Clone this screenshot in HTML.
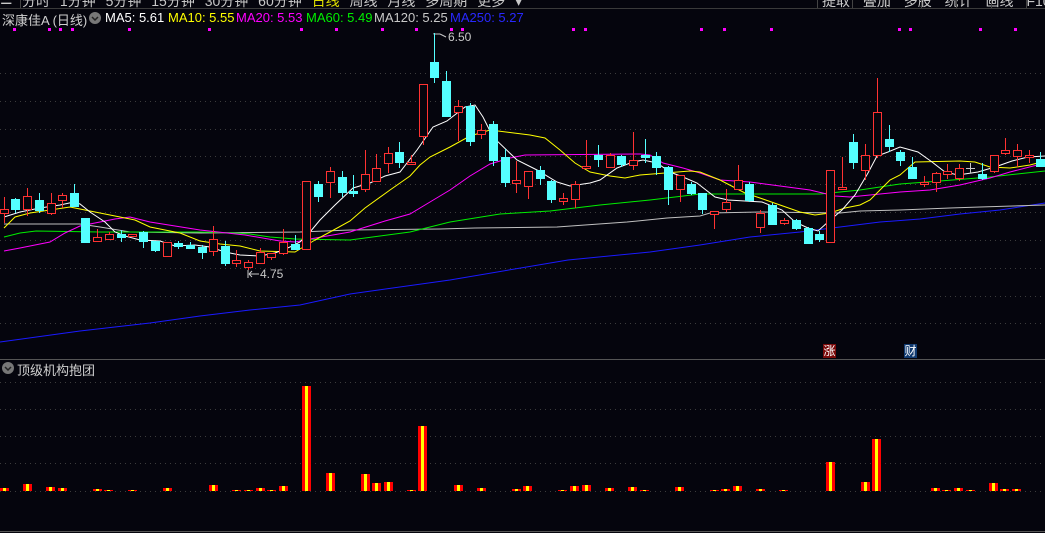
<!DOCTYPE html>
<html><head><meta charset="utf-8"><style>
html,body{margin:0;padding:0;background:#05050d;width:1045px;height:533px;overflow:hidden;font-family:"Liberation Sans","Noto Sans CJK SC",sans-serif}
.t{position:absolute;white-space:nowrap}
</style></head><body>
<div style="position:absolute;left:0;top:0;width:1045px;height:8px;overflow:hidden;border-bottom:1px solid #3a3a3a">
<div class="t" style="left:22px;top:-9px;font-size:14px;color:#c8c8c8;word-spacing:6px">分时 1分钟 5分钟 15分钟 30分钟 60分钟 <span style="color:#e0e000">日线</span> 周线 月线 多周期 更多 ▾</div>
<div class="t" style="left:0;top:-9px;font-size:14px;color:#c8c8c8">☰</div>
<div class="t" style="left:822px;top:-9px;font-size:14px;color:#c8c8c8;word-spacing:9px">提取 叠加 多股 统计 画线 F10 标</div>
</div>
<div class="t" style="left:2px;top:10px;font-size:13px;color:#d0d0d0">深康佳A (日线)</div>
<svg width="14" height="14" style="position:absolute;left:88px;top:11px"><circle cx="7" cy="7" r="6" fill="#777"/><polyline points="4,6 7,9 10,6" fill="none" stroke="#222" stroke-width="1.5"/></svg>
<div class="t" style="left:105px;top:10px;font-size:13px;color:#fff">MA5: 5.61</div>
<div class="t" style="left:168px;top:10px;font-size:13px;color:#ffff00">MA10: 5.55</div>
<div class="t" style="left:236px;top:10px;font-size:13px;color:#ff00ff">MA20: 5.53</div>
<div class="t" style="left:306px;top:10px;font-size:13px;color:#00ee00">MA60: 5.49</div>
<div class="t" style="left:374px;top:10px;font-size:13px;color:#c8c8c8">MA120: 5.25</div>
<div class="t" style="left:450px;top:10px;font-size:13px;color:#2828ff">MA250: 5.27</div>
<div class="t" style="left:17px;top:360px;font-size:13px;color:#d0d0d0">顶级机构抱团</div>
<svg width="14" height="14" style="position:absolute;left:1px;top:361px"><circle cx="7" cy="7" r="6" fill="#777"/><polyline points="4,6 7,9 10,6" fill="none" stroke="#222" stroke-width="1.5"/></svg>
<div class="t" style="left:448px;top:30px;font-size:12px;color:#c8c8c8">6.50</div>
<div class="t" style="left:260px;top:267px;font-size:12px;color:#c8c8c8">4.75</div>
<div class="t" style="left:823px;top:344px;width:13px;height:14px;background:#7a0a0a;color:#fff;font-size:12px;line-height:14px;text-align:center">涨</div>
<div class="t" style="left:904px;top:344px;width:13px;height:14px;background:#103a70;color:#fff;font-size:12px;line-height:14px;text-align:center">财</div>
<svg width="1045" height="533" style="position:absolute;left:0;top:0" xmlns="http://www.w3.org/2000/svg">
<g stroke="#444"><line x1="817.5" x2="817.5" y1="0" y2="8"/><line x1="852.5" x2="852.5" y1="0" y2="8"/><line x1="886.5" x2="886.5" y1="0" y2="8"/><line x1="921.5" x2="921.5" y1="0" y2="8"/><line x1="956.5" x2="956.5" y1="0" y2="8"/><line x1="991.5" x2="991.5" y1="0" y2="8"/><line x1="1026.5" x2="1026.5" y1="0" y2="8"/><line x1="20.5" x2="20.5" y1="0" y2="8"/></g>
<g stroke="#3c3c3c" stroke-dasharray="1,4" stroke-width="1">
<line x1="0" x2="1045" y1="73.5" y2="73.5"/><line x1="0" x2="1045" y1="101.5" y2="101.5"/><line x1="0" x2="1045" y1="129.5" y2="129.5"/><line x1="0" x2="1045" y1="156.5" y2="156.5"/><line x1="0" x2="1045" y1="184.5" y2="184.5"/><line x1="0" x2="1045" y1="212.5" y2="212.5"/><line x1="0" x2="1045" y1="240.5" y2="240.5"/><line x1="0" x2="1045" y1="268.5" y2="268.5"/><line x1="0" x2="1045" y1="296.5" y2="296.5"/><line x1="0" x2="1045" y1="323.5" y2="323.5"/>
<line x1="0" x2="1045" y1="382.5" y2="382.5"/><line x1="0" x2="1045" y1="409.5" y2="409.5"/><line x1="0" x2="1045" y1="436.5" y2="436.5"/><line x1="0" x2="1045" y1="463.5" y2="463.5"/><line x1="0" x2="1045" y1="491.5" y2="491.5"/>
</g>
<line x1="0" x2="1045" y1="359.5" y2="359.5" stroke="#555"/>
<line x1="0" x2="1045" y1="531.5" y2="531.5" stroke="#555"/>
<g fill="#ff00ff">
<rect x="13" y="28" width="3" height="3"/><rect x="48" y="28" width="3" height="3"/><rect x="59" y="28" width="3" height="3"/><rect x="71" y="28" width="3" height="3"/><rect x="128" y="28" width="3" height="3"/><rect x="208" y="28" width="3" height="3"/><rect x="300" y="28" width="3" height="3"/><rect x="335" y="28" width="3" height="3"/><rect x="381" y="28" width="3" height="3"/><rect x="415" y="28" width="3" height="3"/><rect x="450" y="28" width="3" height="3"/><rect x="461" y="28" width="3" height="3"/><rect x="572" y="28" width="3" height="3"/><rect x="584" y="28" width="3" height="3"/><rect x="700" y="28" width="3" height="3"/><rect x="723" y="28" width="3" height="3"/><rect x="770" y="28" width="3" height="3"/><rect x="898" y="28" width="3" height="3"/><rect x="909" y="28" width="3" height="3"/><rect x="979" y="28" width="3" height="3"/><rect x="1014" y="28" width="3" height="3"/>
</g>
<g fill="none" stroke-width="1">
<polyline stroke="#1a1aff" points="0,342 80,331 150,323 200,316 250,310 300,305 350,294 450,280 568,260 650,252 700,245 750,237 800,232 840,227 880,222 920,219 960,214 1000,210 1045,203"/>
<polyline stroke="#c0c0c0" points="4,224 80,224 100,227 130,232 200,233 300,232 350,230 440,229 475,228 557,227 627,222 667,218 700,216 710,213 760,212 840,213 860,211 900,210 950,208 980,207 1045,205"/>
<polyline stroke="#00ee00" points="4,237 20,233 36,231 100,232 200,232 235,233 250,234 270,237 295,239 350,240 380,236 410,232 450,222 500,214 550,211 600,205 650,200 700,194 820,194 840,192 860,190 900,184 940,181 990,177 1045,171"/>
<polyline stroke="#ff00ff" points="4,251 20,248 40,244 50,242 65,233 80,226 100,222 115,219 130,217 150,222 175,226 200,230 245,235 280,241 295,242 310,239 350,232 385,221 410,214 430,202 450,190 470,176 490,164 510,158 525,155 640,154 650,155 663,163 683,168 700,173 720,180 750,182 780,186 810,190 835,196 850,197 900,192 930,190 960,185 990,178 1010,172 1045,163"/>
<polyline stroke="#ffff00" points="4,228 15,217 30,213 50,210 70,207 80,209 100,213 120,217 135,220 150,227 165,230 180,233 200,241 220,244 240,246 260,251 295,252 300,249 315,240 330,232 350,221 365,208 390,190 410,176 420,165 430,157 450,147 470,136 490,130 530,135 545,138 560,150 575,163 590,172 610,176 625,178 640,175 690,171 700,172 720,180 745,193 760,198 780,205 800,212 815,215 830,213 845,208 860,205 870,200 880,190 890,180 900,175 915,162 960,161 975,162 990,167 1010,168 1030,165 1045,161"/>
<polyline stroke="#ffffff" points="4,217 20,212 40,208 60,205 74,202 80,204 90,212 105,222 115,232 125,236 140,240 160,241 175,246 195,245 210,247 225,252 240,255 260,256 275,253 290,247 300,242 310,232 320,220 335,205 353,188 370,183 385,176 400,172 417,150 433,127 447,121 465,107 475,105 483,117 493,137 517,160 537,170 557,182 570,186 590,183 600,180 617,168 633,162 643,160 657,163 670,172 683,177 697,183 715,197 728,200 762,202 782,210 795,222 808,228 818,231 828,222 842,210 855,195 868,173 877,156 888,152 900,147 918,152 932,162 945,172 958,175 978,172 995,167 1012,161 1028,157 1045,156"/>
</g>
<g stroke="#c8c8c8" fill="none"><polyline points="434,33 434,34 440,34"/><line x1="440" y1="34" x2="446" y2="37"/><line x1="249" y1="274" x2="259" y2="274"/><line x1="249" y1="274" x2="252" y2="271"/><line x1="249" y1="274" x2="252" y2="277"/><line x1="248" y1="270" x2="248" y2="278"/></g>
</svg>
<svg width="1045" height="533" style="position:absolute;left:0;top:0" xmlns="http://www.w3.org/2000/svg">
<g stroke="#ff3232" stroke-width="1" fill="#05050d">
<line x1="4.5" x2="4.5" y1="197" y2="223"/><rect x="0.5" y="209.5" width="8" height="4"/>
<line x1="27.5" x2="27.5" y1="188" y2="216"/><rect x="23.5" y="196.5" width="8" height="13"/>
<line x1="51.5" x2="51.5" y1="193" y2="215"/><rect x="47.5" y="203.5" width="8" height="10"/>
<line x1="62.5" x2="62.5" y1="193" y2="208"/><rect x="58.5" y="195.5" width="8" height="5"/>
<line x1="97.5" x2="97.5" y1="229" y2="241"/><rect x="93.5" y="237.5" width="8" height="4"/>
<line x1="109.5" x2="109.5" y1="232" y2="240"/><rect x="105.5" y="234.5" width="8" height="5"/>
<rect x="128.5" y="234.5" width="8" height="2"/>
<rect x="163.5" y="242.5" width="8" height="14"/>
<line x1="213.5" x2="213.5" y1="226" y2="256"/><rect x="209.5" y="239.5" width="8" height="12"/>
<line x1="236.5" x2="236.5" y1="250" y2="267"/><rect x="232.5" y="260.5" width="8" height="3"/>
<line x1="248.5" x2="248.5" y1="260" y2="270"/><rect x="244.5" y="262.5" width="8" height="5"/>
<line x1="260.5" x2="260.5" y1="248" y2="263"/><rect x="256.5" y="252.5" width="8" height="11"/>
<line x1="271.5" x2="271.5" y1="253" y2="260"/><rect x="267.5" y="253.5" width="8" height="4"/>
<line x1="283.5" x2="283.5" y1="229" y2="255"/><rect x="279.5" y="242.5" width="8" height="11"/>
<rect x="302.5" y="181.5" width="8" height="68"/>
<line x1="330.5" x2="330.5" y1="167" y2="198"/><rect x="326.5" y="171.5" width="8" height="11"/>
<line x1="365.5" x2="365.5" y1="150" y2="192"/><rect x="361.5" y="174.5" width="8" height="15"/>
<line x1="376.5" x2="376.5" y1="154" y2="181"/><rect x="372.5" y="168.5" width="8" height="13"/>
<line x1="388.5" x2="388.5" y1="147" y2="173"/><rect x="384.5" y="153.5" width="8" height="10"/>
<line x1="411.5" x2="411.5" y1="155" y2="165"/><rect x="407.5" y="162.5" width="8" height="2"/>
<line x1="423.5" x2="423.5" y1="84" y2="145"/><rect x="419.5" y="84.5" width="8" height="52"/>
<line x1="458.5" x2="458.5" y1="100" y2="141"/><rect x="454.5" y="106.5" width="8" height="6"/>
<line x1="481.5" x2="481.5" y1="124" y2="139"/><rect x="477.5" y="130.5" width="8" height="4"/>
<line x1="516.5" x2="516.5" y1="161" y2="193"/><rect x="512.5" y="180.5" width="8" height="3"/>
<line x1="528.5" x2="528.5" y1="171" y2="199"/><rect x="524.5" y="171.5" width="8" height="15"/>
<line x1="563.5" x2="563.5" y1="193" y2="205"/><rect x="559.5" y="198.5" width="8" height="3"/>
<line x1="575.5" x2="575.5" y1="181" y2="208"/><rect x="571.5" y="184.5" width="8" height="15"/>
<line x1="586.5" x2="586.5" y1="140" y2="169"/><rect x="582.5" y="166.5" width="8" height="2"/>
<line x1="610.5" x2="610.5" y1="153" y2="168"/><rect x="606.5" y="155.5" width="8" height="12"/>
<line x1="633.5" x2="633.5" y1="132" y2="170"/><rect x="629.5" y="160.5" width="8" height="5"/>
<line x1="680.5" x2="680.5" y1="175" y2="202"/><rect x="676.5" y="175.5" width="8" height="14"/>
<line x1="714.5" x2="714.5" y1="211" y2="229"/><rect x="710.5" y="211.5" width="8" height="3"/>
<line x1="726.5" x2="726.5" y1="189" y2="212"/><rect x="722.5" y="202.5" width="8" height="7"/>
<line x1="738.5" x2="738.5" y1="165" y2="189"/><rect x="734.5" y="180.5" width="8" height="9"/>
<line x1="760.5" x2="760.5" y1="210" y2="233"/><rect x="756.5" y="213.5" width="8" height="14"/>
<line x1="784.5" x2="784.5" y1="218" y2="225"/><rect x="780.5" y="220.5" width="8" height="3"/>
<rect x="826.5" y="170.5" width="8" height="72"/>
<line x1="842.5" x2="842.5" y1="157" y2="190"/><rect x="838.5" y="187.5" width="8" height="2"/>
<line x1="865.5" x2="865.5" y1="144" y2="180"/><rect x="861.5" y="155.5" width="8" height="15"/>
<line x1="877.5" x2="877.5" y1="78" y2="158"/><rect x="873.5" y="112.5" width="8" height="43"/>
<line x1="924.5" x2="924.5" y1="176" y2="187"/><rect x="920.5" y="182.5" width="8" height="2"/>
<line x1="936.5" x2="936.5" y1="172" y2="192"/><rect x="932.5" y="173.5" width="8" height="9"/>
<line x1="947.5" x2="947.5" y1="164" y2="179"/><rect x="943.5" y="171.5" width="8" height="3"/>
<line x1="959.5" x2="959.5" y1="164" y2="181"/><rect x="955.5" y="168.5" width="8" height="10"/>
<line x1="994.5" x2="994.5" y1="155" y2="173"/><rect x="990.5" y="155.5" width="8" height="16"/>
<line x1="1005.5" x2="1005.5" y1="138" y2="155"/><rect x="1001.5" y="150.5" width="8" height="3"/>
<line x1="1017.5" x2="1017.5" y1="144" y2="167"/><rect x="1013.5" y="150.5" width="8" height="6"/>
<line x1="1029.5" x2="1029.5" y1="150" y2="163"/><rect x="1025.5" y="155.5" width="8" height="2"/>
</g>
<g stroke="#54ffff" fill="#54ffff">
<line x1="15.5" x2="15.5" y1="198" y2="213"/><rect x="11.5" y="199.5" width="8" height="10"/>
<line x1="39.5" x2="39.5" y1="193" y2="213"/><rect x="35.5" y="200.5" width="8" height="10"/>
<line x1="74.5" x2="74.5" y1="184" y2="207"/><rect x="70.5" y="193.5" width="8" height="13"/>
<rect x="81.5" y="218.5" width="8" height="24"/>
<line x1="121.5" x2="121.5" y1="230" y2="242"/><rect x="117.5" y="234.5" width="8" height="3"/>
<line x1="143.5" x2="143.5" y1="231" y2="248"/><rect x="139.5" y="232.5" width="8" height="9"/>
<line x1="155.5" x2="155.5" y1="241" y2="252"/><rect x="151.5" y="241.5" width="8" height="9"/>
<line x1="178.5" x2="178.5" y1="241" y2="249"/><rect x="174.5" y="243.5" width="8" height="3"/>
<line x1="190.5" x2="190.5" y1="242" y2="249"/><rect x="186.5" y="245.5" width="8" height="3"/>
<line x1="202.5" x2="202.5" y1="245" y2="259"/><rect x="198.5" y="247.5" width="8" height="5"/>
<line x1="225.5" x2="225.5" y1="241" y2="266"/><rect x="221.5" y="246.5" width="8" height="17"/>
<line x1="295.5" x2="295.5" y1="235" y2="250"/><rect x="291.5" y="244.5" width="8" height="5"/>
<line x1="318.5" x2="318.5" y1="181" y2="202"/><rect x="314.5" y="184.5" width="8" height="12"/>
<line x1="342.5" x2="342.5" y1="171" y2="197"/><rect x="338.5" y="177.5" width="8" height="15"/>
<line x1="353.5" x2="353.5" y1="175" y2="197"/><rect x="349.5" y="191.5" width="8" height="2"/>
<line x1="399.5" x2="399.5" y1="142" y2="168"/><rect x="395.5" y="152.5" width="8" height="10"/>
<line x1="434.5" x2="434.5" y1="33" y2="83"/><rect x="430.5" y="62.5" width="8" height="15"/>
<line x1="446.5" x2="446.5" y1="71" y2="117"/><rect x="442.5" y="81.5" width="8" height="35"/>
<line x1="470.5" x2="470.5" y1="103" y2="146"/><rect x="466.5" y="106.5" width="8" height="35"/>
<line x1="493.5" x2="493.5" y1="121" y2="166"/><rect x="489.5" y="124.5" width="8" height="36"/>
<line x1="505.5" x2="505.5" y1="149" y2="187"/><rect x="501.5" y="157.5" width="8" height="25"/>
<line x1="540.5" x2="540.5" y1="166" y2="185"/><rect x="536.5" y="170.5" width="8" height="8"/>
<line x1="551.5" x2="551.5" y1="180" y2="203"/><rect x="547.5" y="181.5" width="8" height="18"/>
<line x1="598.5" x2="598.5" y1="145" y2="167"/><rect x="594.5" y="155.5" width="8" height="4"/>
<line x1="621.5" x2="621.5" y1="155" y2="167"/><rect x="617.5" y="156.5" width="8" height="8"/>
<line x1="645.5" x2="645.5" y1="139" y2="163"/><rect x="641.5" y="155.5" width="8" height="2"/>
<line x1="656.5" x2="656.5" y1="152" y2="175"/><rect x="652.5" y="156.5" width="8" height="11"/>
<line x1="668.5" x2="668.5" y1="166" y2="205"/><rect x="664.5" y="167.5" width="8" height="22"/>
<line x1="691.5" x2="691.5" y1="182" y2="195"/><rect x="687.5" y="184.5" width="8" height="9"/>
<line x1="702.5" x2="702.5" y1="193" y2="214"/><rect x="698.5" y="193.5" width="8" height="16"/>
<line x1="749.5" x2="749.5" y1="182" y2="202"/><rect x="745.5" y="184.5" width="8" height="16"/>
<line x1="772.5" x2="772.5" y1="203" y2="225"/><rect x="768.5" y="205.5" width="8" height="19"/>
<line x1="796.5" x2="796.5" y1="219" y2="230"/><rect x="792.5" y="220.5" width="8" height="8"/>
<line x1="808.5" x2="808.5" y1="227" y2="244"/><rect x="804.5" y="228.5" width="8" height="15"/>
<line x1="819.5" x2="819.5" y1="231" y2="242"/><rect x="815.5" y="234.5" width="8" height="5"/>
<line x1="853.5" x2="853.5" y1="134" y2="169"/><rect x="849.5" y="142.5" width="8" height="20"/>
<line x1="889.5" x2="889.5" y1="125" y2="152"/><rect x="885.5" y="139.5" width="8" height="7"/>
<line x1="900.5" x2="900.5" y1="150" y2="166"/><rect x="896.5" y="152.5" width="8" height="8"/>
<line x1="912.5" x2="912.5" y1="157" y2="179"/><rect x="908.5" y="167.5" width="8" height="11"/>
<line x1="982.5" x2="982.5" y1="163" y2="180"/><rect x="978.5" y="174.5" width="8" height="4"/>
<line x1="1040.5" x2="1040.5" y1="152" y2="166"/><rect x="1036.5" y="159.5" width="8" height="7"/>
</g>
<g stroke="#c8c8c8"><line x1="970.5" x2="970.5" y1="163" y2="173"/><line x1="966" x2="975" y1="168.5" y2="168.5"/></g>
</svg>
<svg width="1045" height="533" style="position:absolute;left:0;top:0" xmlns="http://www.w3.org/2000/svg">
<g fill="#ff0000">
<rect x="0" y="488" width="9" height="3"/><rect x="23" y="484" width="9" height="7"/><rect x="46" y="487" width="9" height="4"/><rect x="58" y="488" width="9" height="3"/><rect x="93" y="489" width="9" height="2"/><rect x="104" y="490" width="9" height="1"/><rect x="128" y="490" width="9" height="1"/><rect x="163" y="488" width="9" height="3"/><rect x="209" y="485" width="9" height="6"/><rect x="232" y="490" width="9" height="1"/><rect x="244" y="490" width="9" height="1"/><rect x="256" y="488" width="9" height="3"/><rect x="267" y="490" width="9" height="1"/><rect x="279" y="486" width="9" height="5"/><rect x="302" y="386" width="9" height="105"/><rect x="326" y="473" width="9" height="18"/><rect x="361" y="474" width="9" height="17"/><rect x="372" y="483" width="9" height="8"/><rect x="384" y="482" width="9" height="9"/>
<rect x="407" y="490" width="9" height="1"/><rect x="418" y="426" width="9" height="65"/><rect x="454" y="485" width="9" height="6"/><rect x="477" y="488" width="9" height="3"/><rect x="512" y="489" width="9" height="2"/><rect x="523" y="486" width="9" height="5"/><rect x="558" y="490" width="9" height="1"/><rect x="570" y="486" width="9" height="5"/><rect x="582" y="485" width="9" height="6"/><rect x="605" y="488" width="9" height="3"/><rect x="628" y="487" width="9" height="4"/><rect x="640" y="490" width="9" height="1"/><rect x="675" y="487" width="9" height="4"/><rect x="710" y="490" width="9" height="1"/><rect x="721" y="489" width="9" height="2"/><rect x="733" y="486" width="9" height="5"/><rect x="756" y="489" width="9" height="2"/><rect x="779" y="490" width="9" height="1"/><rect x="826" y="462" width="9" height="29"/><rect x="861" y="482" width="9" height="9"/><rect x="872" y="439" width="9" height="52"/><rect x="931" y="488" width="9" height="3"/><rect x="942" y="490" width="9" height="1"/><rect x="954" y="488" width="9" height="3"/><rect x="966" y="490" width="9" height="1"/><rect x="989" y="483" width="9" height="8"/><rect x="1000" y="489" width="9" height="2"/><rect x="1012" y="489" width="9" height="2"/>
</g>
<g fill="#ffff00">
<rect x="3" y="488" width="3" height="3"/><rect x="26" y="484" width="3" height="7"/><rect x="49" y="487" width="3" height="4"/><rect x="61" y="488" width="3" height="3"/><rect x="96" y="489" width="3" height="2"/><rect x="107" y="490" width="3" height="1"/><rect x="131" y="490" width="3" height="1"/><rect x="166" y="488" width="3" height="3"/><rect x="212" y="485" width="3" height="6"/><rect x="235" y="490" width="3" height="1"/><rect x="247" y="490" width="3" height="1"/><rect x="259" y="488" width="3" height="3"/><rect x="270" y="490" width="3" height="1"/><rect x="282" y="486" width="3" height="5"/><rect x="305" y="386" width="3" height="105"/><rect x="329" y="473" width="3" height="18"/><rect x="364" y="474" width="3" height="17"/><rect x="375" y="483" width="3" height="8"/><rect x="387" y="482" width="3" height="9"/>
<rect x="410" y="490" width="3" height="1"/><rect x="421" y="426" width="3" height="65"/><rect x="457" y="485" width="3" height="6"/><rect x="480" y="488" width="3" height="3"/><rect x="515" y="489" width="3" height="2"/><rect x="526" y="486" width="3" height="5"/><rect x="561" y="490" width="3" height="1"/><rect x="573" y="486" width="3" height="5"/><rect x="585" y="485" width="3" height="6"/><rect x="608" y="488" width="3" height="3"/><rect x="631" y="487" width="3" height="4"/><rect x="643" y="490" width="3" height="1"/><rect x="678" y="487" width="3" height="4"/><rect x="713" y="490" width="3" height="1"/><rect x="724" y="489" width="3" height="2"/><rect x="736" y="486" width="3" height="5"/><rect x="759" y="489" width="3" height="2"/><rect x="782" y="490" width="3" height="1"/><rect x="829" y="462" width="3" height="29"/><rect x="864" y="482" width="3" height="9"/><rect x="875" y="439" width="3" height="52"/><rect x="934" y="488" width="3" height="3"/><rect x="945" y="490" width="3" height="1"/><rect x="957" y="488" width="3" height="3"/><rect x="969" y="490" width="3" height="1"/><rect x="992" y="483" width="3" height="8"/><rect x="1003" y="489" width="3" height="2"/><rect x="1015" y="489" width="3" height="2"/>
</g>
</svg>
</body></html>
